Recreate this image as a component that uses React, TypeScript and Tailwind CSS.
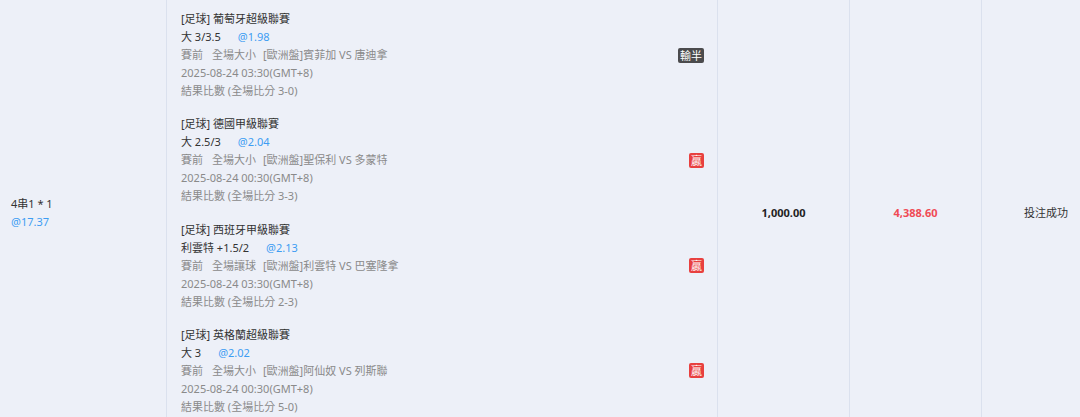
import React from "react";

type Leg = {
  league: string;
  pick: string;
  odds: string;
  market: string;
  match: string;
  time: string;
  result: string;
  badge: "lose-half" | "win";
};

const legs: Leg[] = [
  {
    league: "[足球] 葡萄牙超級聯賽",
    pick: "大 3/3.5",
    odds: "@1.98",
    market: "全場大小",
    match: "[歐洲盤]賓菲加 VS 唐迪拿",
    time: "2025-08-24 03:30(GMT+8)",
    result: "結果比數 (全場比分 3-0)",
    badge: "lose-half",
  },
  {
    league: "[足球] 德國甲級聯賽",
    pick: "大 2.5/3",
    odds: "@2.04",
    market: "全場大小",
    match: "[歐洲盤]聖保利 VS 多蒙特",
    time: "2025-08-24 00:30(GMT+8)",
    result: "結果比數 (全場比分 3-3)",
    badge: "win",
  },
  {
    league: "[足球] 西班牙甲級聯賽",
    pick: "利雲特 +1.5/2",
    odds: "@2.13",
    market: "全場讓球",
    match: "[歐洲盤]利雲特 VS 巴塞隆拿",
    time: "2025-08-24 03:30(GMT+8)",
    result: "結果比數 (全場比分 2-3)",
    badge: "win",
  },
  {
    league: "[足球] 英格蘭超級聯賽",
    pick: "大 3",
    odds: "@2.02",
    market: "全場大小",
    match: "[歐洲盤]阿仙奴 VS 列斯聯",
    time: "2025-08-24 00:30(GMT+8)",
    result: "結果比數 (全場比分 5-0)",
    badge: "win",
  },
];

function Badge({ kind }: { kind: Leg["badge"] }) {
  if (kind === "lose-half") {
    return (
      <span className="inline-flex h-[15px] items-center rounded-[2px] bg-[#4b4b4d] px-[2px] text-[11px] leading-none text-white">
        輸半
      </span>
    );
  }
  return (
    <span className="inline-flex h-[15px] w-[15px] items-center justify-center rounded-[2px] bg-[#e8403f] text-[11px] leading-none text-white">
      贏
    </span>
  );
}

export default function App() {
  return (
    <div
      className="h-[417px] w-[1080px] overflow-hidden bg-[#edf0f8] text-[11px] leading-[18px] text-[#333]"
      style={{ fontFamily: '"Noto Sans", "Noto Sans CJK TC", sans-serif' }}
    >
      <div className="flex w-[1110px]">
        <div className="flex w-[166px] flex-col justify-center pl-[11px]">
          <div className="text-[#333]">4串1 * 1</div>
          <div className="text-[#3d9df3]">@17.37</div>
        </div>
        <div className="flex w-[552px] flex-col gap-[15.33px] border-x border-[#dbe1ee] pb-[11px] pl-[14px] pr-[13px] pt-[10px]">
          {legs.map((l, i) => (
            <div key={i} className="flex flex-col">
              <div className="text-[#333]">{l.league}</div>
              <div className="flex">
                <span className="text-[#333]">{l.pick}</span>
                <span className="ml-[17px] text-[#3d9df3]">{l.odds}</span>
              </div>
              <div className="flex items-center justify-between text-[#8a8a8a]">
                <span>
                  賽前<span className="ml-[9px]">{l.market}</span>
                  <span className="ml-[7px]">{l.match}</span>
                </span>
                <Badge kind={l.badge} />
              </div>
              <div className="text-[#8a8a8a]">{l.time}</div>
              <div className="text-[#8a8a8a]">{l.result}</div>
            </div>
          ))}
        </div>
        <div className="flex w-[132px] items-center justify-center border-r border-[#dbe1ee] font-bold text-[#222]">
          1,000.00
        </div>
        <div className="flex w-[132px] items-center justify-center border-r border-[#dbe1ee] font-bold text-[#f04a55]">
          4,388.60
        </div>
        <div className="flex flex-1 items-center justify-center text-[#333]">投注成功</div>
      </div>
    </div>
  );
}
